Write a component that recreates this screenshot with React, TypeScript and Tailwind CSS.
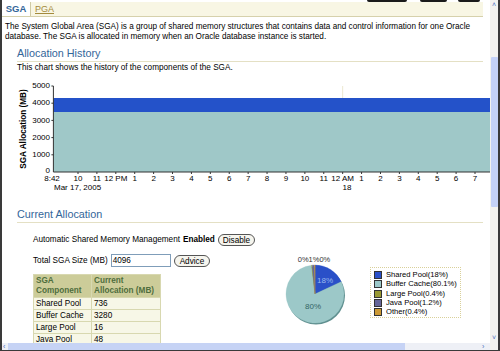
import React from 'react';

// Datos de la asignación actual de la SGA
const componentes = [
  { nombre: 'Shared Pool', mb: 736 },
  { nombre: 'Buffer Cache', mb: 3280 },
  { nombre: 'Large Pool', mb: 16 },
  { nombre: 'Java Pool', mb: 48 },
];

const leyenda = [
  { nombre: 'Shared Pool(18%)', color: '#2a50c8', pct: 18 },
  { nombre: 'Buffer Cache(80.1%)', color: '#9cc8c8', pct: 80.1 },
  { nombre: 'Large Pool(0.4%)', color: '#999933', pct: 0.4 },
  { nombre: 'Java Pool(1.2%)', color: '#666699', pct: 1.2 },
  { nombre: 'Other(0.4%)', color: '#cc9933', pct: 0.4 },
];

// Etiquetas del eje X: [hora, texto]
const horas: [number, string][] = [
  [10, '10'], [11, '11'], [12, '12 PM'], [13, '1'], [14, '2'], [15, '3'], [16, '4'], [17, '5'],
  [18, '6'], [19, '7'], [20, '8'], [21, '9'], [22, '10'], [23, '11'], [24, '12 AM'], [25, '1'],
  [26, '2'], [27, '3'], [28, '4'], [29, '5'], [30, '6'], [31, '7'],
];

// x dentro del svg (el svg empieza en x=2 de la página)
const xHora = (h: number) => 78 + (h - 10) * 18.905 - 2;

const GraficoHistoria = () => {
  const top = 9;
  const base = 95;
  const left = 51.4;
  const right = 488;
  const yVal = (v: number) => base - (v / 5000) * (base - top);
  return (
    <svg width="488" height="117" className="block">
      <text x="22" y="52" transform="rotate(-90 22 52)" textAnchor="middle" dominantBaseline="middle" fontSize="8.2" fontWeight="bold" fill="#000">
        SGA Allocation (MB)
      </text>
      {[5000, 4000, 3000, 2000, 1000, 0].map((v) => (
        <text key={v} x="48" y={v === 0 ? yVal(v) - 1 : yVal(v)} textAnchor="end" dominantBaseline="middle" fontSize="8" fill="#000">
          {v}
        </text>
      ))}
      <rect x={left} y={21} width={right - left} height={14} fill="#2452c9" />
      <rect x={left} y={35} width={right - left} height={base - 35} fill="#9fc8c8" />
      <line x1={xHora(24)} y1={top} x2={xHora(24)} y2={21} stroke="#ece8d0" />
      <line x1={left} y1={top} x2={left} y2={base} stroke="#333" />
      <line x1={left} y1={base} x2={right} y2={base} stroke="#333" />
      {[5000, 4000, 3000, 2000, 1000].map((v) => (
        <line key={v} x1={left - 2} y1={yVal(v)} x2={left} y2={yVal(v)} stroke="#333" />
      ))}
      {horas.map(([h]) => (
        <line key={h} x1={xHora(h)} y1={base} x2={xHora(h)} y2={base + 2} stroke="#333" />
      ))}
      <text x="50" y="102" textAnchor="middle" dominantBaseline="middle" fontSize="8" fill="#000">8:42</text>
      {horas.map(([h, t]) => (
        <text key={h} x={xHora(h)} y="102" textAnchor="middle" dominantBaseline="middle" fontSize="8" fill="#000">
          {t}
        </text>
      ))}
      <text x="52" y="111" dominantBaseline="middle" fontSize="8" fill="#000">Mar 17, 2005</text>
      <text x="345" y="111" textAnchor="middle" dominantBaseline="middle" fontSize="8" fill="#000">18</text>
    </svg>
  );
};

// Sector de la tarta en grados, desde las 12 en sentido horario
const sector = (cx: number, cy: number, r: number, a0: number, a1: number) => {
  const p = (a: number) => [cx + r * Math.sin((a * Math.PI) / 180), cy - r * Math.cos((a * Math.PI) / 180)];
  const [x0, y0] = p(a0);
  const [x1, y1] = p(a1);
  const grande = a1 - a0 > 180 ? 1 : 0;
  return `M${cx},${cy} L${x0},${y0} A${r},${r} 0 ${grande} 1 ${x1},${y1} Z`;
};

const Tarta = () => {
  const cx = 35;
  const cy = 40;
  const r = 29;
  let acc = 0;
  const sectores = leyenda.map((l) => {
    const a0 = acc;
    acc += (l.pct / 100) * 360;
    return { ...l, a0, a1: acc };
  });
  return (
    <svg width="72" height="76" className="block">
      <circle cx={cx + 1} cy={cy + 1.5} r={r} fill="#5f8f8f" />
      {sectores.map((s) => (
        <path key={s.nombre} d={sector(cx, cy, r, s.a0, s.a1)} fill={s.color} stroke={s.color} strokeWidth="0.3" />
      ))}
      <text x="34" y="6" textAnchor="middle" dominantBaseline="middle" fontSize="7.5" fill="#333">0%1%0%</text>
      <text x="45" y="27" textAnchor="middle" dominantBaseline="middle" fontSize="8" fill="#9bb8ee">18%</text>
      <text x="33" y="53" textAnchor="middle" dominantBaseline="middle" fontSize="8" fill="#336666">80%</text>
    </svg>
  );
};

export default function App() {
  return (
    <div className="w-[500px] h-[351px] overflow-hidden bg-white border-l-2 border-r-2 border-b border-[#3a3a3a] flex flex-col font-['Liberation_Sans',Arial,sans-serif] text-black text-[8.2px] leading-[10px]">
      <div className="flex-1 flex min-h-0">
        {/* Contenido de la página */}
        <div className="flex-1 min-w-0 overflow-hidden">
          <div className="h-[2px] flex">
            <div className="ml-[365px] w-[40px] bg-[#1a1a1a] rounded-b-[3px]" />
            <div className="ml-[13px] w-[27px] bg-[#1a1a1a] rounded-b-[3px]" />
            <div className="ml-[11px] w-[22px] bg-[#1a1a1a] rounded-b-[3px]" />
          </div>

          {/* Pestañas */}
          <div className="h-[15px] w-[481px] bg-[#f8f6e4] border-b border-[#d6d1ac] flex items-stretch">
            <div className="w-[29px] bg-white border-r border-[#cfcaa4] flex items-center justify-center text-[9.5px] font-bold text-[#336699]">
              SGA
            </div>
            <div className="px-[4px] flex items-center text-[9px] text-[#a38a3c] underline">PGA</div>
          </div>

          <p className="pl-[3px] w-[480px] mt-[5px]">
            The System Global Area (SGA) is a group of shared memory structures that contains data and control information for one Oracle database. The SGA is allocated in memory when an Oracle database instance is started.
          </p>

          <h2 className="ml-[15px] mt-[5px] w-[466px] text-[10.8px] leading-[13px] text-[#336699] border-b border-[#e4e0c4] pb-[1px]">
            Allocation History
          </h2>
          <p className="pl-[15px] mt-[1px]">This chart shows the history of the components of the SGA.</p>

          <div className="mt-[4px]">
            <GraficoHistoria />
          </div>

          <h2 className="ml-[15px] mt-[14px] w-[466px] text-[10.8px] leading-[13px] text-[#336699] border-b border-[#e4e0c4] pb-[1px]">
            Current Allocation
          </h2>

          <div className="flex mt-[11px]">
            <div className="w-[250px] shrink-0 pl-[31px] whitespace-nowrap">
              <div className="flex items-center h-[12px]">
                <span>Automatic Shared Memory Management</span>
                <span className="ml-[3px] font-bold">Enabled</span>
                <button className="ml-[3px] h-[12px] px-[4px] pt-[1px] inline-flex items-center rounded-full border border-[#555] bg-[#f6f5ee] text-[8.2px] leading-[9px]">
                  Disable
                </button>
              </div>
              <div className="flex items-center mt-[8px] h-[13px]">
                <span>Total SGA Size (MB)</span>
                <div className="ml-[3px] w-[60px] h-[13px] border border-[#7f9db9] bg-white flex items-center px-[1px]">4096</div>
                <button className="ml-[3px] h-[12px] px-[5px] pt-[1px] inline-flex items-center rounded-full border border-[#555] bg-[#f6f5ee] text-[8.2px] leading-[9px]">
                  Advice
                </button>
              </div>
              <table className="mt-[7px] border-collapse w-[128px] whitespace-normal">
                <thead>
                  <tr className="bg-[#cccc99] text-[#4f6e3d] font-bold text-left align-top">
                    <th className="w-[58px] px-[2px] py-[1px] border border-[#d8d8b0] font-bold leading-[10px]">SGA Component</th>
                    <th className="px-[2px] py-[1px] border border-[#d8d8b0] font-bold leading-[10px]">Current Allocation (MB)</th>
                  </tr>
                </thead>
                <tbody>
                  {componentes.map((c) => (
                    <tr key={c.nombre} className="bg-[#f7f7e7]">
                      <td className="px-[2px] h-[12px] border border-[#d8d8b0]">{c.nombre}</td>
                      <td className="px-[2px] h-[12px] border border-[#d8d8b0]">{c.mb}</td>
                    </tr>
                  ))}
                </tbody>
              </table>
            </div>

            <div className="ml-[28px] mt-[20px] flex items-start">
              <Tarta />
              <div className="ml-[18px] mt-[13px] w-[91px] h-[51px] border border-dotted border-[#d9d09a] px-[3px] pt-[3px] flex flex-col gap-[1.3px] whitespace-nowrap">
                {leyenda.map((l) => (
                  <div key={l.nombre} className="flex items-center h-[8px] text-[7.6px]">
                    <span className="shrink-0 w-[8px] h-[8px] border border-[#333] mr-[4px]" style={{ backgroundColor: l.color }} />
                    {l.nombre}
                  </div>
                ))}
              </div>
            </div>
          </div>
        </div>

        {/* Barra de desplazamiento vertical */}
        <div className="w-[8px] bg-[#f3f3ef] flex flex-col items-center">
          <div className="h-[10px] text-[7px] leading-[10px] text-[#4a6fc0]">˄</div>
          <div className="mt-[47px] w-[7px] h-[150px] bg-[#c4d2f7] rounded-[1px]" />
          <div className="flex-1" />
          <div className="h-[10px] text-[7px] leading-[10px] text-[#4a6fc0]">˅</div>
        </div>
      </div>

      {/* Barra de desplazamiento horizontal */}
      <div className="h-[7px] flex bg-[#eef0f6]">
        <div className="w-[6px] text-[7px] leading-[7px] text-[#4a6fc0] pl-[1px]">‹</div>
        <div className="w-[397px] bg-[#c6d3f5]" />
        <div className="flex-1" />
        <div className="w-[8px] text-[7px] leading-[7px] text-[#4a6fc0]">›</div>
        <div className="w-[8px] bg-[#f3f3ef]" />
      </div>
    </div>
  );
}
